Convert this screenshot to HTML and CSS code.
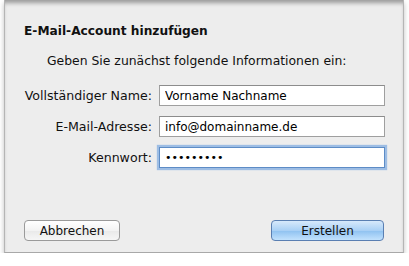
FILE: index.html
```html
<!DOCTYPE html>
<html lang="de">
<head>
  <meta charset="UTF-8" />
  <title>E-Mail-Account hinzufügen</title>
  <link rel="stylesheet" href="styles.css">
</head>
<body>
  <div class="sheet">
    <div class="sheet-title">E-Mail-Account hinzufügen</div>
    <div class="sheet-intro">Geben Sie zunächst folgende Informationen ein:</div>
    <div class="form">
      <label class="form-label" for="name">Vollständiger Name:</label>
      <input class="field" id="name" type="text" value="Vorname Nachname">
      <label class="form-label" for="mail">E-Mail-Adresse:</label>
      <input class="field" id="mail" type="text" value="info@domainname.de">
      <label class="form-label" for="pass">Kennwort:</label>
      <input class="field focused" id="pass" type="password" value="123456789">
    </div>
    <div class="buttons">
      <button class="btn">Abbrechen</button>
      <button class="btn btn-default">Erstellen</button>
    </div>
  </div>
</body>
</html>
```

FILE: styles.css
```css
* { box-sizing: border-box; }
body {
  margin: 0;
  background: #fff;
  font-family: 'DejaVu Sans', sans-serif;
  color: #111;
}
.sheet {
  margin: 0 5px 0 4px;
  height: 253px;
  background: #ededed;
  border-left: 1px solid #b5b5b5;
  border-right: 1px solid #b5b5b5;
  border-bottom: 1px solid #a8a8a8;
  box-shadow: inset 0 5px 4px -2px rgba(0,0,0,0.35), 0 3px 5px rgba(0,0,0,0.25);
  padding: 24px 19px 0 19px;
  display: flex;
  flex-direction: column;
}
.sheet-title {
  font-weight: bold;
  font-size: 12.2px;
  line-height: 14px;
}
.sheet-intro {
  font-size: 12.4px;
  line-height: 14px;
  margin: 16px 0 0 23px;
}
.form {
  display: grid;
  grid-template-columns: 128px 226px;
  column-gap: 7px;
  row-gap: 10px;
  align-items: center;
  margin-top: 17px;
}
.form-label {
  text-align: right;
  font-size: 12.6px;
  white-space: nowrap;
}
.field {
  height: 21px;
  border: 1px solid #9f9f9f;
  border-top-color: #8c8c8c;
  background: #fff;
  font-family: 'DejaVu Sans', sans-serif;
  font-size: 12px;
  padding: 0 5px;
  color: #000;
  outline: none;
}
.field.focused {
  border: 1px solid #5d8cc6;
  box-shadow: 0 0 1px 2px #9dbde4;
  font-size: 11px;
}
.buttons {
  margin-top: auto;
  margin-bottom: 11px;
  display: flex;
  justify-content: space-between;
}
.btn {
  height: 21px;
  width: 96px;
  font-family: 'DejaVu Sans', sans-serif;
  font-size: 12px;
  color: #111;
  background: linear-gradient(#ffffff, #f3f3f3 50%, #e9e9e9 51%, #f6f6f6);
  border: 1px solid #9a9a9a;
  border-radius: 4px;
  padding: 0;
}
.btn-default {
  width: 113px;
  border-color: #5a7fb2;
  background: linear-gradient(#d7e9fb, #a9d0f5 50%, #8ec1f0 51%, #c2e2fd);
}
```
